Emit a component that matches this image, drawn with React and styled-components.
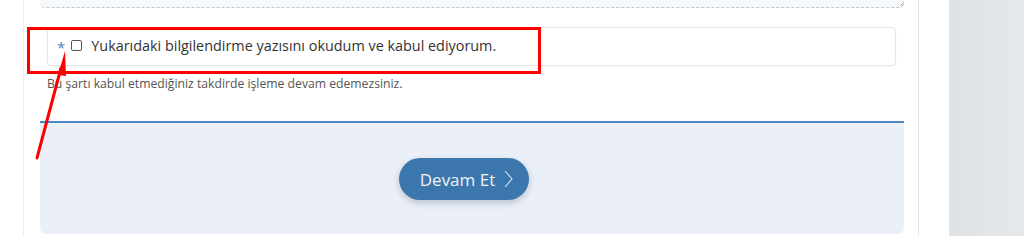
import React from "react";
import styled, { createGlobalStyle } from "styled-components";

const GlobalStyle = createGlobalStyle`
  html, body {
    margin: 0;
    padding: 0;
    background: #ffffff;
    font-family: "Open Sans", "Noto Sans", sans-serif;
  }
`;

const Page = styled.div`
  position: relative;
  display: flex;
  height: 236px;
  overflow: hidden;
`;

const Main = styled.div`
  width: 949px;
  padding-left: 23px;
  box-sizing: border-box;
  background: #ffffff;
`;

const Panel = styled.div`
  width: 896px;
  height: 100%;
  box-sizing: border-box;
  border-left: 1px solid #efeff0;
  border-right: 1px solid #e4e4e6;
  padding: 0 14px 2px 16px;
  display: flex;
  flex-direction: column;
`;

const Sidebar = styled.div`
  flex: 1;
  background: linear-gradient(90deg, #dfe2e5 0%, #e6e9ec 100%);
`;

const TextAreaTail = styled.div`
  position: relative;
  height: 7px;
  background: #f5f9fc;
  border-bottom: 1px dashed #c3c8ce;
  border-radius: 0 0 5px 5px;
`;

const ResizeGrip = styled.svg`
  position: absolute;
  right: 0;
  bottom: 1px;
  width: 5px;
  height: 5px;
`;

const ConsentBox = styled.div`
  margin: 19px 8px 0 7px;
  height: 39px;
  box-sizing: border-box;
  border: 1px solid #e6e7e8;
  border-radius: 4px;
  box-shadow: 0 1px 2px rgba(0, 0, 0, 0.04);
  display: flex;
  align-items: center;
  padding-left: 9px;
`;

const Star = styled.span`
  color: #4f86b9;
  font-size: 15px;
  margin-right: 6px;
`;

const Check = styled.input`
  width: 11px;
  height: 11px;
  margin: 0 9px 2px 0;
  border: 1px solid #555;
  border-radius: 2px;
  appearance: none;
  background: #fff;
`;

const ConsentLabel = styled.label`
  font-size: 14.4px;
  color: #333333;
  padding-bottom: 2px;
`;

const HelpText = styled.p`
  margin: 9px 0 0 7px;
  font-size: 12.2px;
  color: #555555;
`;

const Footer = styled.div`
  margin-top: auto;
  height: 113px;
  box-sizing: border-box;
  background: #ebf0f8;
  border-top: 2px solid #4a87c4;
  border-radius: 0 0 6px 6px;
  display: flex;
  justify-content: center;
  padding: 35px 17px 0 0;
`;

const NextButton = styled.button`
  width: 130px;
  height: 42px;
  border: none;
  border-radius: 21px;
  background: #3b76ad;
  color: #eef3f8;
  font-family: "Open Sans", "Noto Sans", sans-serif;
  font-size: 17px;
  display: flex;
  align-items: center;
  justify-content: center;
  gap: 9px;
  padding: 0 0 0 6px;
  box-shadow: 0 3px 7px rgba(40, 60, 90, 0.25);
`;

const Highlight = styled.div`
  position: absolute;
  left: 27px;
  top: 27px;
  width: 514px;
  height: 47px;
  box-sizing: border-box;
  border: 3px solid #ff0000;
  pointer-events: none;
`;

const Pointer = styled.svg`
  position: absolute;
  left: 0;
  top: 0;
  width: 120px;
  height: 236px;
  pointer-events: none;
`;

export default function App() {
  return (
    <Page>
      <GlobalStyle />
      <Main>
        <Panel>
          <TextAreaTail>
            <ResizeGrip viewBox="0 0 5 5">
              <path d="M1 5 L5 1 M3 5 L5 3" stroke="#a0a6ad" strokeWidth="0.8" />
            </ResizeGrip>
          </TextAreaTail>
          <ConsentBox>
            <Star>*</Star>
            <Check type="checkbox" id="consent" />
            <ConsentLabel htmlFor="consent">
              Yukarıdaki bilgilendirme yazısını okudum ve kabul ediyorum.
            </ConsentLabel>
          </ConsentBox>
          <HelpText>Bu şartı kabul etmediğiniz takdirde işleme devam edemezsiniz.</HelpText>
          <Footer>
            <NextButton>
              Devam Et
              <svg width="9" height="18" viewBox="0 0 9 18">
                <polyline points="1,1 8,9 1,17" fill="none" stroke="#dfe8f2" strokeWidth="1.1" />
              </svg>
            </NextButton>
          </Footer>
        </Panel>
      </Main>
      <Sidebar />
      <Highlight />
      <Pointer viewBox="0 0 120 236">
        <line x1="37" y1="158" x2="61" y2="68" stroke="#ff0000" strokeWidth="3" strokeLinecap="round" />
        <polygon points="65,51 58,75 66,76" fill="#ff0000" />
      </Pointer>
    </Page>
  );
}
